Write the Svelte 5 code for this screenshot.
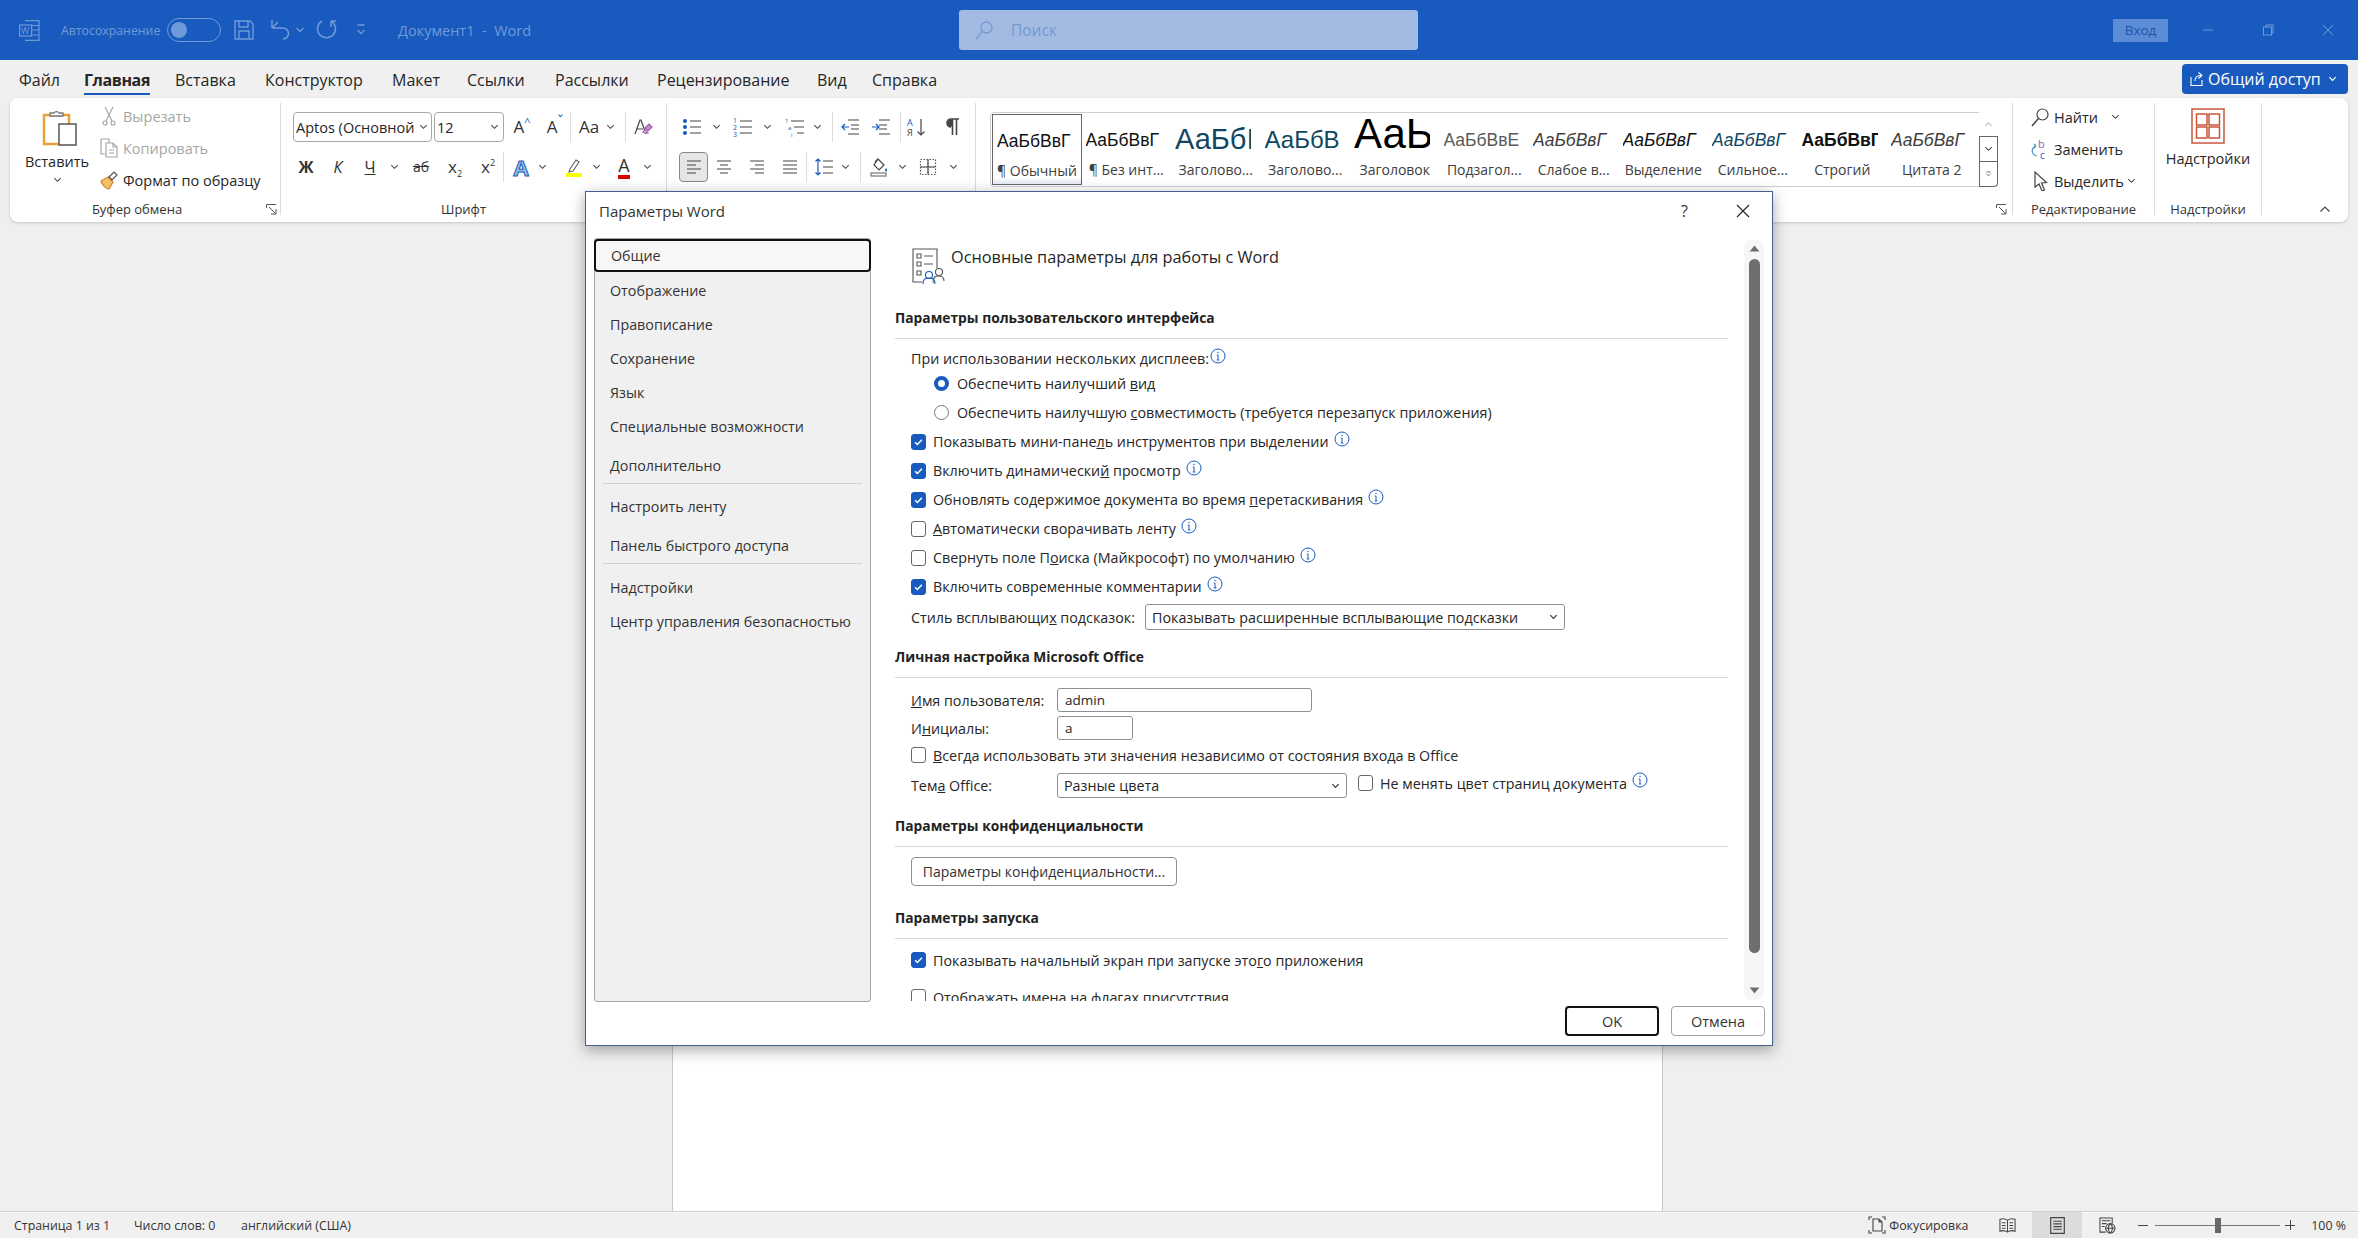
<script>
  const tabs = [
    ['Файл', 65], ['Главная', 91], ['Вставка', 90], ['Конструктор', 127], ['Макет', 75],
    ['Ссылки', 88], ['Рассылки', 102], ['Рецензирование', 160], ['Вид', 55], ['Справка', 80]
  ];

  const icons = {
    bullets: '<g fill="#185abd" stroke="none"><circle cx="3" cy="4" r="2"/><circle cx="3" cy="10" r="2"/><circle cx="3" cy="16" r="2"/></g><path d="M8 4h11M8 10h11M8 16h11"/>',
    numbers: '<g fill="#185abd" stroke="none" font-size="7" font-family="Open Sans"><text x="0" y="6">1</text><text x="0" y="13">2</text><text x="0" y="20">3</text></g><path d="M7 4h12M7 10h12M7 16h12"/>',
    multi: '<g fill="#185abd" stroke="none" font-size="6" font-family="Open Sans"><text x="0" y="6">1</text><text x="3" y="13">a</text><text x="6" y="20">i</text></g><path d="M6 4h13M9 10h10M12 16h7"/>',
    outdent: '<path d="M8 3h11M11 8h8M11 12h8M8 17h11"/><path d="M9 10H2M5 7l-3 3 3 3" stroke="#185abd"/>',
    indent: '<path d="M1 3h11M1 8h8M1 12h8M1 17h11" transform="translate(7 0)"/><path d="M1 10h7M5 7l3 3-3 3" stroke="#185abd"/>',
    sort: '<g font-size="9" font-family="Open Sans" stroke="none"><text x="1" y="9" fill="#185abd">А</text><text x="1" y="19" fill="#444">Я</text></g><path d="M15 2v16M11.500 14.500 15 18l3.500-3.500"/>',
    pilcrow: '<path d="M9 10a4 4 0 0 1 0-8h8M10.500 2v16M14.500 2v16" stroke-width="1.600"/><path d="M9 2.500a3.500 3.500 0 0 0 0 7h1.500v-7z" fill="#444" stroke="none"/>',
    left: '<path d="M3 4h14M3 8h9M3 12h14M3 16h9"/>',
    center: '<path d="M3 4h14M6 8h8M3 12h14M6 16h8"/>',
    right: '<path d="M3 4h14M8 8h9M3 12h14M8 16h9"/>',
    justify: '<path d="M3 4h14M3 8h14M3 12h14M3 16h14"/>',
    spacing: '<path d="M9 4h10M9 10h10M9 16h10"/><path d="M4 2v16M1.500 4.500 4 2l2.500 2.500M1.500 15.500 4 18l2.500-2.500" stroke="#185abd"/>',
    shading: '<path d="m9 2 6 6-5 5-5-5z"/><path d="M6 5 9 2"/><path d="M17 11c1 1.500 1.500 2.200 1 3s-2 .5-2-.5.500-1.500 1-2.500z" fill="#185abd" stroke="none"/><rect x="2" y="16" width="15" height="3" fill="#fff" stroke="#777"/>',
    borders: '<path d="M2.500 2.500h15v15h-15zM10 2.500v15M2.500 10h15" stroke-dasharray="1.500 1.500" stroke="#555"/><path d="M2.500 10h15M10 2.500v15" stroke="#555"/>',
    clear: '<path d="M2 17 7 3h1l5 14M4 12h6"/><path d="m12 11 4-4 3 3-4 4z" fill="#c58ad0" stroke="#a35bb0"/><path d="m10 15 2-2 3 3h-3z" fill="#fff" stroke="#a35bb0"/>',
    hl: '<path d="m6 12 6-9 3 2-6 9-4 1z" fill="#fff" stroke="#666"/><rect x="2" y="16" width="16" height="4" fill="#ffff00" stroke="none"/>',
    find: '<circle cx="12.500" cy="7.500" r="5.500"/><path d="M8.500 11.500 2 19" stroke-width="1.500"/>',
    replace: '<text x="8" y="9" font-size="11" fill="#a35bb0" stroke="none" font-family="Open Sans">b</text><text x="10" y="20" font-size="10" fill="#185abd" stroke="none" font-family="Open Sans">c</text><path d="M6 7C2 8 1 13 4 16M6 7 4 5M6 7 4 9M4 16l3 1" stroke="#3b9ac6"/>',
    select: '<path d="m5 1 0 15 4-3 3 7 2.500-1-3-7 5-.5z"/>'
  };

  const font1 = [
    { w: 36, t: 'A', up: 1 }, { w: 30, t: 'A', up: -1 }, { sep: 1 }, { w: 34, t: 'Aa' }, { w: 8, i: 'chev' },
    { w: 11 }, { sep: 1 }, { w: 32, i: 'clear' }
  ];
  const font2 = [
    { w: 26, t: 'Ж', c: 'bold' }, { w: 38, t: 'К', c: 'ital' }, { w: 26, t: 'Ч', c: 'und' }, { w: 22, i: 'chev' },
    { w: 32, t: 'аб', c: 'str' }, { w: 36, t: 'x', sub: '2' }, { w: 30, t: 'x', sup: '2' }, { sep: 1 },
    { w: 32, t: 'A', c: 'effect' }, { w: 10, i: 'chev' }, { w: 17 }, { w: 20, i: 'hl' }, { w: 24, i: 'chev' },
    { w: 32, t: 'A', c: 'red' }, { w: 14, i: 'chev' }
  ];
  const para1 = [
    { w: 13 }, { w: 24, i: 'bullets' }, { w: 24, i: 'chev' }, { w: 30, i: 'numbers' }, { w: 18, i: 'chev' },
    { w: 38, i: 'multi' }, { w: 6, i: 'chev' }, { w: 12 }, { sep: 1 }, { w: 32, i: 'outdent' }, { w: 30, i: 'indent' },
    { w: 4 }, { sep: 1 }, { w: 28, i: 'sort' }, { w: 44, i: 'pilcrow' }
  ];
  const para2 = [
    { w: 12 }, { w: 29, i: 'left', on: 1 }, { w: 32, i: 'center' }, { w: 34, i: 'right' }, { w: 32, i: 'justify' },
    { sep: 1 }, { w: 32, i: 'spacing' }, { w: 10, i: 'chev' }, { w: 10 }, { sep: 1 }, { w: 34, i: 'shading' },
    { w: 12, i: 'chev' }, { w: 40, i: 'borders' }, { w: 10, i: 'chev' }
  ];

  const styles = [
    ['АаБбВвГ', '¶ Обычный', 's-normal'], ['АаБбВвГ', '¶ Без инт...', 's-normal'], ['АаБбI', 'Заголово...', 's-h1'],
    ['АаБбВ', 'Заголово...', 's-h2'], ['АаЬ', 'Заголовок', 's-title'], ['АаБбВвЕ', 'Подзагол...', 's-sub'],
    ['АаБбВвГ', 'Слабое в...', 's-em s-soft'], ['АаБбВвГ', 'Выделение', 's-em'], ['АаБбВвГ', 'Сильное...', 's-em s-strong-em'],
    ['АаБбВвГ', 'Строгий', 's-normal s-bold'], ['АаБбВвГ', 'Цитата 2', 's-em s-soft']
  ];
</script>

{#snippet svgIcon(name)}
  <svg class="ic" viewBox="0 0 20 20" fill="none" stroke="#444" stroke-width="1.200">{@html icons[name]}</svg>
{/snippet}

{#snippet toolRow(items)}
  <div class="trow">
    {#each items as it}
      {#if it.sep}
        <span class="tsep"></span>
      {:else}
        <span class="tool" class:on={it.on} style:width="{it.w}px">
          {#if it.i}
            {#if it.i === 'chev'}
              <svg class="chev" viewBox="0 0 10 6" fill="none" stroke="#444" stroke-width="1.200"><path d="m1.500 1 3.500 3.500L8.500 1"/></svg>
            {:else}
              {@render svgIcon(it.i)}
            {/if}
          {:else if it.t}
            <span class="glyph {it.c || ''}">{it.t}{#if it.sub}<sub>{it.sub}</sub>{/if}{#if it.sup}<sup>{it.sup}</sup>{/if}{#if it.up === 1}<sup class="caret">^</sup>{/if}{#if it.up === -1}<sup class="caret caret-dn">ˇ</sup>{/if}</span>
          {/if}
        </span>
      {/if}
    {/each}
  </div>
{/snippet}

{#snippet launcher()}
  <svg class="launch" viewBox="0 0 11 11" fill="none" stroke="#555" stroke-width="1"><path d="M.5 4V.5H10M3 3l6.500 6.500M5 10h5V5"/></svg>
{/snippet}

{#snippet info()}
  <svg class="info" viewBox="0 0 16 16" fill="none" stroke="#185abd" stroke-width="1"><circle cx="8" cy="8" r="7"/><path d="M8 7v5M6.800 7H8M6.800 12h2.500"/><circle cx="8" cy="4.500" r=".7" fill="#185abd" stroke="none"/></svg>
{/snippet}

{#snippet box(on)}
  <span class="cb" class:checked={on}>
    {#if on}
      <svg viewBox="0 0 16 16" fill="none" stroke="#fff" stroke-width="1.800"><path d="m3.800 8.300 2.800 2.800 5.600-6"/></svg>
    {/if}
  </span>
{/snippet}

{#snippet check(on, pre, key, post, hasInfo)}
  <div class="opt">
    {@render box(on)}
    <span class="opt-label">{pre}<u>{key}</u>{post}</span>
    {#if hasInfo}{@render info()}{/if}
  </div>
{/snippet}

{#snippet selectBox(text, cls)}
  <div class="select {cls}">
    <span>{text}</span>
    <svg viewBox="0 0 10 6" fill="none" stroke="#333" stroke-width="1.300"><path d="m1.500 1 3.500 3.500L8.500 1"/></svg>
  </div>
{/snippet}

<div class="app">
  <header class="titlebar">
    <div class="tb-left">
      <svg class="tb-word" viewBox="0 0 21 21" fill="none" stroke="currentColor" stroke-width="1.200"><path d="M6 .6h14v19.800H6M13 5.500h7M13 10h7M13 15h7"/><rect x=".6" y="5" width="12" height="11" /><text x="2" y="14" font-size="9" fill="currentColor" stroke="none" font-family="Open Sans">W</text></svg>
      <span class="tb-auto">Автосохранение</span>
      <span class="toggle"><span class="knob"></span></span>
      <svg class="tb-save" viewBox="0 0 20 20" fill="none" stroke="currentColor" stroke-width="1.400"><path d="M1 1h15l3 3v15H1zM5 1v6h9V1M5 19v-8h10v8"/></svg>
      <svg class="tb-undo" viewBox="0 0 20 24" fill="none" stroke="currentColor" stroke-width="1.500"><path d="M2 10h11a5.500 5.500 0 0 1 0 11M2 2v8M2 10l6-6"/></svg>
      <svg class="tb-chev" viewBox="0 0 10 6" fill="none" stroke="currentColor" stroke-width="1.300"><path d="m1.500 1 3.500 3.500L8.500 1"/></svg>
      <svg class="tb-redo" viewBox="0 0 21 24" fill="none" stroke="currentColor" stroke-width="1.500"><path d="M15 3a9 9 0 1 1-9 0M15 3V9M15 3h5"/></svg>
      <svg class="tb-cust" viewBox="0 0 10 12" fill="none" stroke="currentColor" stroke-width="1.300"><path d="M1.500 1h7M1.500 6 5 9.500 8.500 6"/></svg>
      <span class="tb-doc">Документ1&nbsp; -&nbsp; Word</span>
    </div>
    <div class="search">
      <svg viewBox="0 0 20 20" fill="none" stroke="currentColor" stroke-width="1.300"><circle cx="12.500" cy="7.500" r="5.500"/><path d="M8.500 11.500 2 19"/></svg>
      <span>Поиск</span>
    </div>
    <div class="tb-right">
      <span class="login">Вход</span>
      <span class="winbtn"><svg viewBox="0 0 14 14" stroke="currentColor"><path d="M2 7h10"/></svg></span>
      <span class="winbtn"><svg viewBox="0 0 14 14" fill="none" stroke="currentColor"><rect x="2.500" y="4" width="8" height="8"/><path d="M5 4V2h7v8h-1.500"/></svg></span>
      <span class="winbtn"><svg viewBox="0 0 14 14" fill="none" stroke="currentColor"><path d="m2 2 10 10M12 2 2 12"/></svg></span>
    </div>
  </header>

  <nav class="tabs">
    {#each tabs as [name, w]}
      <div class="tab" style:width="{w}px"><span class:active={name === 'Главная'}>{name}</span></div>
    {/each}
    <div class="share">
      <svg viewBox="0 0 16 16" fill="none" stroke="#fff" stroke-width="1.100"><path d="M2 6v8.500h11V9M6 10c0-4 3-5.500 6-5.500M9.500 1.500l3.500 3-3.500 3"/></svg>
      <span>Общий доступ</span>
      <svg class="share-chev" viewBox="0 0 10 6" fill="none" stroke="#fff" stroke-width="1.300"><path d="m1.500 1 3.500 3.500L8.500 1"/></svg>
    </div>
  </nav>

  <section class="ribbon">
    <div class="group g-clip">
      <div class="gbody clip-body">
        <div class="paste">
          <svg viewBox="0 0 36 38" fill="none">
            <rect x="2" y="7" width="25" height="29" stroke="#e9a23b" stroke-width="2.500"/>
            <path d="M8 8V5h4a3 3 0 0 1 5 0h4v3z" fill="#fff" stroke="#777" stroke-width="1.300"/>
            <rect x="17" y="16" width="17" height="21" fill="#fff" stroke="#555" stroke-width="1.500"/>
          </svg>
          <span>Вставить</span>
          <svg class="chev" viewBox="0 0 10 6" fill="none" stroke="#444" stroke-width="1.200"><path d="m1.500 1 3.500 3.500L8.500 1"/></svg>
        </div>
        <div class="clip-list">
          <div class="clip-row off">
            <svg viewBox="0 0 20 20" fill="none" stroke="#a6a6a6" stroke-width="1.200"><circle cx="6" cy="17" r="2"/><circle cx="14" cy="17" r="2"/><path d="M7 15 14 1M13 15 6 1"/></svg>
            <span>Вырезать</span>
          </div>
          <div class="clip-row off">
            <svg viewBox="0 0 20 20" fill="none" stroke="#a6a6a6" stroke-width="1.200"><path d="M2 1h8v4M2 1v15h4"/><path d="M7 5h7l4 4v10H7zM14 5v4h4M10 12h5M10 15h5"/></svg>
            <span>Копировать</span>
          </div>
          <div class="clip-row">
            <svg viewBox="0 0 20 20" fill="none"><path d="m2 11 7-4 5 5-4 7c-3-.5-7-4-8-8z" fill="#f5c26b" stroke="#d9822b" stroke-width="1.200"/><path d="m10 7 5-5 3 3-5 5z" fill="#fff" stroke="#555" stroke-width="1.200"/></svg>
            <span>Формат по образцу</span>
          </div>
        </div>
      </div>
      <div class="glabel">Буфер обмена {@render launcher()}</div>
    </div>

    <div class="group g-font">
      <div class="gbody rows">
        <div class="frow">
          <div class="cbox cbox-font"><span>Aptos (Основной</span><svg class="chev" viewBox="0 0 10 6" fill="none" stroke="#444" stroke-width="1.200"><path d="m1.500 1 3.500 3.500L8.500 1"/></svg></div>
          <div class="cbox cbox-size"><span>12</span><svg class="chev" viewBox="0 0 10 6" fill="none" stroke="#444" stroke-width="1.200"><path d="m1.500 1 3.500 3.500L8.500 1"/></svg></div>
          {@render toolRow(font1)}
        </div>
        {@render toolRow(font2)}
      </div>
      <div class="glabel">Шрифт {@render launcher()}</div>
    </div>

    <div class="group g-para">
      <div class="gbody rows">
        {@render toolRow(para1)}
        {@render toolRow(para2)}
      </div>
    </div>

    <div class="group g-styles">
      <div class="gbody gallery-wrap">
        <div class="gallery">
          {#each styles as [sample, label, cls], i}
            <div class="style" class:current={i === 0}>
              <div class="preview {cls}">{sample}</div>
              <div class="stlabel">{label}</div>
            </div>
          {/each}
          <div class="gscroll">
            <span class="dim"><svg class="chev" viewBox="0 0 10 6" fill="none" stroke="#bbb" stroke-width="1.200"><path d="m1.500 5 3.500-3.500L8.500 5"/></svg></span>
            <span class="mid"><svg class="chev" viewBox="0 0 10 6" fill="none" stroke="#444" stroke-width="1.200"><path d="m1.500 1 3.500 3.500L8.500 1"/></svg></span>
            <span class="more"><svg class="chev" viewBox="0 0 10 10" fill="none" stroke="#444" stroke-width="1.200"><path d="M1.500 1.500h7M1.500 4.500 5 8l3.500-3.500"/></svg></span>
          </div>
        </div>
      </div>
      <div class="glabel glabel-end">{@render launcher()}</div>
    </div>

    <div class="group g-edit">
      <div class="gbody edit-list">
        <div class="edit-row">{@render svgIcon('find')}<span class="e-find">Найти</span><svg class="chev" viewBox="0 0 10 6" fill="none" stroke="#444" stroke-width="1.200"><path d="m1.500 1 3.500 3.500L8.500 1"/></svg></div>
        <div class="edit-row">{@render svgIcon('replace')}<span>Заменить</span></div>
        <div class="edit-row">{@render svgIcon('select')}<span class="e-sel">Выделить</span><svg class="chev" viewBox="0 0 10 6" fill="none" stroke="#444" stroke-width="1.200"><path d="m1.500 1 3.500 3.500L8.500 1"/></svg></div>
      </div>
      <div class="glabel">Редактирование</div>
    </div>

    <div class="group g-addin">
      <div class="gbody addin-body">
        <svg viewBox="0 0 34 36" fill="none" stroke="#c8563c" stroke-width="1.500">
          <rect x="1" y="1" width="32" height="34"/>
          <rect x="5.500" y="6" width="10.500" height="11"/><rect x="18" y="6" width="10.500" height="11"/>
          <rect x="5.500" y="19" width="10.500" height="11"/><rect x="18" y="19" width="10.500" height="11"/>
        </svg>
        <span>Надстройки</span>
      </div>
      <div class="glabel">Надстройки</div>
    </div>

    <div class="group g-end">
      <svg viewBox="0 0 12 8" fill="none" stroke="#444" stroke-width="1.200"><path d="m1.500 6.500 4.500-4.500 4.500 4.500"/></svg>
    </div>
  </section>

  <main class="workspace">
    <div class="page"></div>
  </main>

  <footer class="statusbar">
    <span class="st st-page">Страница 1 из 1</span>
    <span class="st st-words">Число слов: 0</span>
    <span class="st">английский (США)</span>
    <div class="st-right">
      <svg class="st-focus" viewBox="0 0 18 18" fill="none" stroke="#444" stroke-width="1.100"><path d="M1 4V1h3M14 1h3v3M17 14v3h-3M4 17H1v-3"/><path d="M5 3h6l3 3v9H5zM11 3v3h3"/></svg>
      <span class="st-ftext">Фокусировка</span>
      <span class="view"><svg viewBox="0 0 18 16" fill="none" stroke="#444" stroke-width="1.100"><path d="M1 1.500c3-1 6-.5 8 1 2-1.500 5-2 8-1V14c-3-1-6-.5-8 1-2-1.500-5-2-8-1zM9 2.500V15M3 5h4M3 8h4M3 11h4M11 5h4M11 8h4M11 11h4"/></svg></span>
      <span class="view v-print"><svg viewBox="0 0 14 16" fill="none" stroke="#444" stroke-width="1.100"><path d="M.6.6h12.800v14.800H.6zM3 4h8M3 6.500h8M3 9h8M3 11.500h8"/></svg></span>
      <span class="view"><svg viewBox="0 0 18 18" fill="none" stroke="#444" stroke-width="1.100"><path d="M7 16H1V1h13v6M3 4h9M3 7h5M3 10h3"/><circle cx="12" cy="12" r="5" fill="#efefef"/><path d="M7 12h10M12 7c-3 3-3 7 0 10M12 7c3 3 3 7 0 10"/></svg></span>
      <span class="zoom-minus"></span>
      <div class="slider"><span class="thumb"></span></div>
      <span class="zoom-plus"></span>
      <span class="st-zoom">100 %</span>
    </div>
  </footer>

  <div class="dialog">
    <div class="dlg-title">
      <span>Параметры Word</span>
      <span class="dlg-help">?</span>
      <svg class="dlg-close" viewBox="0 0 14 14" fill="none" stroke="#222" stroke-width="1.100"><path d="m1 1 12 12M13 1 1 13"/></svg>
    </div>
    <div class="dlg-body">
      <div class="dlg-nav">
        <div class="nav-item selected">Общие</div>
        <div class="nav-item">Отображение</div>
        <div class="nav-item">Правописание</div>
        <div class="nav-item">Сохранение</div>
        <div class="nav-item">Язык</div>
        <div class="nav-item">Специальные возможности</div>
        <div class="nav-item mt5">Дополнительно</div>
        <div class="nav-sep"></div>
        <div class="nav-item mt6">Настроить ленту</div>
        <div class="nav-item mt5">Панель быстрого доступа</div>
        <div class="nav-sep"></div>
        <div class="nav-item mt7">Надстройки</div>
        <div class="nav-item">Центр управления безопасностью</div>
      </div>

      <div class="dlg-content">
        <div class="intro">
          <svg viewBox="0 0 33 36" fill="none" stroke="#555" stroke-width="1.100">
            <path d="M25 20V1H1v33h9M5 6h4v4H5zM5 14h4v4H5zM5 23h4v4H5zM12 8h9M12 16h9"/>
            <circle cx="27" cy="24" r="3.500"/><path d="M21 35c0-6 2-7 6-7s5 2 5 5"/>
            <circle cx="17" cy="27" r="3.500" stroke="#185abd"/><path d="M11 36c0-5 2-6 6-6s6 1 6 6" stroke="#185abd"/>
          </svg>
          <span>Основные параметры для работы с Word</span>
        </div>

        <h3 class="sec first">Параметры пользовательского интерфейса</h3>
        <div class="line multi">При использовании нескольких дисплеев:{@render info()}</div>
        <div class="radio-row"><span class="radio on"></span><span>Обеспечить наилучший <u>в</u>ид</span></div>
        <div class="radio-row"><span class="radio"></span><span>Обеспечить наилучшую <u>с</u>овместимость (требуется перезапуск приложения)</span></div>
        {@render check(true, 'Показывать мини-пане', 'л', 'ь инструментов при выделении', true)}
        {@render check(true, 'Включить динамически', 'й', ' просмотр', true)}
        {@render check(true, 'Обновлять содержимое документа во время ', 'п', 'еретаскивания', true)}
        {@render check(false, '', 'А', 'втоматически сворачивать ленту', true)}
        {@render check(false, 'Свернуть поле П', 'о', 'иска (Майкрософт) по умолчанию', true)}
        {@render check(true, 'Включить современные комментарии', '', '', true)}
        <div class="field tips">
          <span class="tips-label">Стиль всплывающи<u>х</u> подсказок:</span>
          {@render selectBox('Показывать расширенные всплывающие подсказки', 'sel-tips')}
        </div>

        <h3 class="sec s2">Личная настройка Microsoft Office</h3>
        <div class="field f-name">
          <span class="flabel"><u>И</u>мя пользователя:</span>
          <div class="input in-name">admin</div>
        </div>
        <div class="field f-init">
          <span class="flabel">И<u>н</u>ициалы:</span>
          <div class="input in-init">a</div>
        </div>
        <div class="always">{@render check(false, '', 'В', 'сегда использовать эти значения независимо от состояния входа в Office', false)}</div>
        <div class="field f-theme">
          <span class="flabel">Тем<u>а</u> Office:</span>
          {@render selectBox('Разные цвета', 'sel-theme')}
          <div class="theme-opt">{@render check(false, 'Не менять цвет страниц документа', '', '', true)}</div>
        </div>

        <h3 class="sec s3">Параметры конфиденциальности</h3>
        <button class="privacy">Параметры конфиденциальности...</button>

        <h3 class="sec s4">Параметры запуска</h3>
        <div class="start1">{@render check(true, 'Показывать начальный экран при запуске это', 'г', 'о приложения', false)}</div>
        <div class="start2">{@render check(false, 'Отображать имена на флагах присутствия', '', '', false)}</div>
      </div>

      <div class="scroll">
        <svg viewBox="0 0 12 8" fill="#6e6e6e"><path d="M6 .5 11.500 7.500H.5z"/></svg>
        <div class="sthumb"></div>
        <svg class="sdown" viewBox="0 0 12 8" fill="#6e6e6e"><path d="M.5.5h11L6 7.500z"/></svg>
      </div>
    </div>
    <div class="dlg-foot">
      <button class="dbtn default">OK</button>
      <button class="dbtn">Отмена</button>
    </div>
  </div>
</div>

<style>
  :global(body) {
    margin: 0;
    font-family: "Open Sans", "Noto Sans", sans-serif;
    background: #efefef;
    color: #262626;
  }

  .app {
    position: relative;
    width: 2358px;
    height: 1238px;
    overflow: hidden;
    display: flex;
    flex-direction: column;
    font-size: 14.500px;
  }

  /* title bar */
  .titlebar {
    flex: none;
    height: 60px;
    background: #185abd;
    color: #6f9ad9;
    display: grid;
    grid-template-columns: 959px 459px 1fr;
  }
  .tb-left {
    display: flex;
    align-items: center;
    padding-left: 19px;
  }
  .tb-word { width: 21px; height: 21px; }
  .tb-auto { margin-left: 21px; width: 106px; font-size: 12.300px; white-space: nowrap; }
  .toggle {
    width: 54px;
    height: 24px;
    box-sizing: border-box;
    border: 1.500px solid #6f9ad9;
    border-radius: 12px;
    display: flex;
    align-items: center;
    padding-left: 3px;
  }
  .knob { width: 16px; height: 16px; border-radius: 50%; background: #6f9ad9; }
  .tb-save { margin-left: 13px; width: 20px; height: 20px; }
  .tb-undo { margin-left: 16px; width: 20px; height: 24px; }
  .tb-chev { margin-left: 5px; width: 10px; height: 6px; }
  .tb-redo { margin-left: 11px; width: 21px; height: 24px; }
  .tb-cust { margin-left: 19px; width: 10px; height: 12px; }
  .tb-doc { margin-left: 32px; font-size: 14.500px; }
  .search {
    margin-top: 10px;
    height: 40px;
    background: #a3bbe3;
    border-radius: 3px;
    display: flex;
    align-items: center;
    color: #7498d2;
    padding-left: 15px;
    font-size: 15.500px;
  }
  .search svg { width: 20px; height: 20px; margin-right: 17px; }
  .tb-right { display: flex; align-items: center; justify-content: flex-end; }
  .login {
    width: 55px;
    height: 23px;
    margin-right: 10px;
    background: #5c8cd6;
    color: #1f55a8;
    font-size: 13.500px;
    display: flex;
    align-items: center;
    justify-content: center;
  }
  .winbtn { width: 60px; display: flex; justify-content: center; }
  .winbtn svg { width: 14px; height: 14px; }

  /* tabs */
  .tabs {
    flex: none;
    height: 38px;
    background: #f0f0f0;
    display: flex;
    padding-left: 19px;
    box-sizing: border-box;
  }
  .tab { padding-top: 9px; font-size: 16px; line-height: 22px; white-space: nowrap; }
  .tab span { display: inline-block; padding-bottom: 2px; }
  .tab span.active { font-weight: 700; border-bottom: 2px solid #185abd; letter-spacing: -.4px; }
  .share {
    margin: 4px 10px 0 auto;
    width: 166px;
    height: 30px;
    background: #185abd;
    color: #fff;
    border-radius: 4px;
    display: flex;
    align-items: center;
    padding-left: 7px;
    box-sizing: border-box;
    font-size: 16px;
  }
  .share svg { width: 16px; height: 16px; margin-right: 3px; }
  .share .share-chev { width: 9px; height: 6px; margin-left: 7px; margin-right: 0; }

  /* ribbon */
  .ribbon {
    flex: none;
    height: 124px;
    margin: 0 10px;
    padding-top: 5px;
    box-sizing: border-box;
    background: #fff;
    border-radius: 8px;
    box-shadow: 0 1px 3px rgba(0, 0, 0, .18);
    display: flex;
  }
  .group {
    position: relative;
    height: 112px;
    box-sizing: border-box;
    border-right: 1px solid #dcdcdc;
    flex: none;
  }
  .gbody { height: 96px; box-sizing: border-box; }
  .glabel {
    position: relative;
    margin-top: 3px;
    line-height: 14px;
    font-size: 13px;
    text-align: center;
    color: #333;
    white-space: nowrap;
  }
  .launch { position: absolute; right: 3px; top: 2px; width: 11px; height: 11px; }
  .g-clip { width: 271px; }
  .g-font { width: 386px; }
  .g-para { width: 309px; }
  .g-styles { width: 1037px; }
  .g-edit { width: 142px; }
  .g-addin { width: 107px; }
  .g-end { flex: 1; border: none; position: relative; }
  .g-end svg { position: absolute; right: 17px; bottom: 2px; width: 12px; height: 8px; }
  .g-clip .glabel { padding-right: 16px; }
  .g-font .glabel { padding-right: 20px; }
  .g-font .launch { display: none; }

  .clip-body { display: flex; }
  .paste {
    width: 84px;
    margin-left: 5px;
    display: flex;
    flex-direction: column;
    align-items: center;
    font-size: 14.500px;
  }
  .paste > svg:first-child { width: 36px; height: 38px; margin: 5px 0 0 5px; }
  .paste span { margin-top: 6px; line-height: 20px; }
  .paste .chev { margin-top: 5px; }
  .clip-list { margin-top: -3px; }
  .clip-row { display: flex; align-items: center; height: 32px; white-space: nowrap; font-size: 14.500px; }
  .clip-row svg { width: 20px; height: 20px; margin-right: 4px; }
  .clip-row.off { color: #a6a6a6; }

  .rows { padding-top: 9px; display: flex; flex-direction: column; gap: 10px; }
  .g-font .rows { padding-left: 12px; }
  .frow { display: flex; }
  .trow { display: flex; height: 30px; align-items: center; }
  .tool { flex: none; height: 30px; display: flex; align-items: center; justify-content: center; box-sizing: border-box; position: relative; }
  .tool.on { background: #e6e6e6; border: 1px solid #8a8a8a; border-radius: 4px; }
  .tsep { flex: none; width: 2px; height: 30px; box-sizing: border-box; border-left: 1px solid #dcdcdc; }
  .ic { width: 20px; height: 20px; flex: none; }
  .chev { width: 9px; height: 6px; flex: none; overflow: visible; }
  .glyph { font-size: 17px; color: #333; line-height: 20px; white-space: nowrap; }
  .glyph.bold { font-weight: 700; font-size: 16px; }
  .glyph.ital { font-style: italic; font-size: 16px; }
  .glyph.und { text-decoration: underline; font-size: 16px; }
  .glyph.str { text-decoration: line-through; font-size: 14px; }
  .glyph.effect { font-weight: 700; font-size: 22px; color: #9bc2e6; -webkit-text-stroke: 1px #185abd; }
  .glyph.red { font-size: 18px; border-bottom: 4px solid #e00000; line-height: 19px; }
  .glyph sub, .glyph sup { font-size: 9px; line-height: 0; }
  .caret { color: #185abd; font-size: 11px !important; }
  .caret-dn { font-size: 14px !important; }

  .cbox {
    height: 30px;
    box-sizing: border-box;
    border: 1px solid #a8a8a8;
    border-radius: 4px;
    display: flex;
    align-items: center;
    justify-content: space-between;
    padding: 0 3px 0 2px;
    white-space: nowrap;
    font-size: 14.500px;
    flex: none;
  }
  .cbox-font { width: 139px; }
  .cbox-size { width: 70px; margin-left: 2px; padding-right: 4px; }

  .gallery-wrap { padding-top: 9px; padding-left: 14px; }
  .gallery {
    width: 1008px;
    height: 75px;
    box-sizing: border-box;
    border: 1px solid #cfcfcf;
    border-radius: 4px;
    display: flex;
    padding-left: 1px;
    position: relative;
  }
  .style {
    width: 89.500px;
    flex: none;
    height: 71px;
    margin-top: 1px;
    box-sizing: border-box;
    padding: 0 4px;
    overflow: hidden;
    text-align: center;
  }
  .style.current { border: 1px solid #666; background: linear-gradient(#fff 90%, #e3e8f3); }
  .preview { width: 76px; height: 44px; line-height: 52px; white-space: nowrap; overflow: hidden; font-family: "Liberation Sans", sans-serif; text-align: left; }
  .stlabel { font-size: 14px; line-height: 24px; color: #404040; white-space: nowrap; }
  .s-normal { font-size: 17.500px; color: #111; }
  .s-h1 { font-size: 29px; color: #0f4761; line-height: 50px; }
  .s-h2 { font-size: 24px; color: #0f4761; }
  .s-title { font-size: 42px; line-height: 40px; color: #000; text-align: center; }
  .s-sub { font-size: 17.500px; color: #595959; }
  .s-em { font-size: 17.500px; font-style: italic; color: #111; }
  .s-soft { color: #404040; }
  .s-strong-em { color: #0f4761; }
  .s-bold { font-weight: 700; }
  .gscroll {
    position: absolute;
    right: -1px;
    top: -1px;
    width: 19px;
    height: 75px;
    display: flex;
    flex-direction: column;
    background: #fff;
  }
  .gscroll span {
    flex: 1;
    display: flex;
    align-items: center;
    justify-content: center;
  }
  .gscroll .mid { border: 1px solid #666; border-width: 1px 1px; }
  .gscroll .more { border: 1px solid #666; border-top: 0; border-radius: 0 0 4px 0; }
  .glabel-end { height: 14px; }
  .glabel-end .launch { right: 5px; top: 2px; }

  .edit-list { padding: 0 0 0 17px; margin-top: -2px; }
  .edit-row { display: flex; align-items: center; height: 32px; white-space: nowrap; font-size: 14.500px; }
  .edit-row .ic { margin-right: 4px; }
  .e-find { width: 57px; }
  .e-sel { margin-right: 3px; }
  .edit-list + .glabel { margin-top: 5px; }

  .addin-body { display: flex; flex-direction: column; align-items: center; font-size: 14.500px; }
  .addin-body svg { width: 34px; height: 36px; margin-top: 5px; }
  .addin-body span { margin-top: 5px; line-height: 20px; }

  /* document */
  .workspace { flex: 1; min-height: 0; padding-left: 672px; }
  .page {
    width: 991px;
    height: 100%;
    box-sizing: border-box;
    background: #fff;
    border: 1px solid #c9c9c9;
    border-width: 0 1px;
  }

  /* status bar */
  .statusbar {
    flex: none;
    height: 27px;
    box-sizing: border-box;
    background: #f0f0f0;
    border-top: 1px solid #cfcfcf;
    box-shadow: inset 0 1px 0 #fafafa;
    display: flex;
    align-items: center;
    font-size: 12.400px;
    color: #333;
    padding-left: 14px;
  }
  .st { white-space: nowrap; }
  .st-page { width: 120px; }
  .st-words { width: 107px; }
  .st-right { margin-left: auto; display: flex; align-items: center; height: 100%; }
  .st-focus { width: 18px; height: 18px; margin-right: 3px; }
  .st-ftext { width: 93px; }
  .view { width: 50px; height: 100%; display: flex; align-items: center; justify-content: center; }
  .view svg { width: 17px; height: 17px; }
  .v-print { background: #dcdcdc; }
  .zoom-minus { width: 10px; height: 1px; background: #444; margin-left: 6px; margin-right: 7px; }
  .slider { width: 125px; height: 1px; background: #777; display: flex; align-items: center; padding-left: 60px; box-sizing: border-box; }
  .thumb { width: 6px; height: 15px; background: #666; }
  .zoom-plus {
    width: 10px;
    height: 10px;
    margin-left: 5px;
    background:
      linear-gradient(#444, #444) center / 10px 1px no-repeat,
      linear-gradient(#444, #444) center / 1px 10px no-repeat;
  }
  .st-zoom { margin-left: 16px; margin-right: 12px; white-space: nowrap; }

  /* dialog */
  .dialog {
    position: absolute;
    left: 585px;
    top: 191px;
    width: 1188px;
    height: 855px;
    box-sizing: border-box;
    background: #fff;
    border: 1px solid #44608f;
    box-shadow: 0 4px 14px rgba(0, 0, 0, .35);
    display: flex;
    flex-direction: column;
    font-size: 14.300px;
  }
  .dlg-title {
    flex: none;
    height: 46px;
    box-sizing: border-box;
    padding: 0 22px 8px 13px;
    display: flex;
    align-items: center;
    font-size: 15px;
    color: #333;
  }
  .dlg-help { margin-left: auto; margin-right: 48px; font-size: 16px; }
  .dlg-close { width: 14px; height: 14px; }
  .dlg-body { flex: none; height: 764px; display: flex; }
  .dlg-nav {
    flex: none;
    width: 277px;
    margin-left: 8px;
    box-sizing: border-box;
    background: #f0f0f0;
    border: 1px solid #a6a6a6;
    border-radius: 3px;
  }
  .nav-item { height: 34px; line-height: 34px; padding-left: 15px; white-space: nowrap; color: #333; }
  .nav-item.selected { height: 33px; line-height: 30px; margin: 0 -1px 0 -1px; background: #f7f7f7; border: 2px solid #111; border-radius: 4px; box-sizing: border-box; padding-left: 15px; }
  .nav-item:nth-child(2) { margin-top: 2px; }
  .mt5 { margin-top: 5px; }
  .mt6 { margin-top: 6px; }
  .mt7 { margin-top: 7px; }
  .nav-sep { height: 1px; background: #d0d0d0; margin: 0 8px; }

  .dlg-content {
    flex: none;
    width: 833px;
    height: 763px;
    margin-left: 24px;
    overflow: hidden;
  }
  .intro { display: flex; padding: 10px 0 0 17px; height: 36px; }
  .intro svg { width: 33px; height: 36px; flex: none; }
  .intro span { margin-left: 6px; font-size: 16.300px; line-height: 18px; }
  .sec {
    margin: 0;
    height: 30px;
    line-height: 20px;
    box-sizing: content-box;
    border-bottom: 1px solid #d4d4d4;
    font-size: 13.800px;
    font-weight: 700;
    color: #222;
  }
  .sec.first { margin-top: 24px; }
  .s2 { margin-top: 17px; }
  .s3 { margin-top: 18px; }
  .s4 { margin-top: 22px; }

  .line { margin-left: 16px; }
  .multi { height: 20px; margin-top: 10px; line-height: 20px; display: flex; align-items: center; }
  .radio-row { height: 29px; margin-left: 39px; display: flex; align-items: center; gap: 8px; }
  .radio { width: 15px; height: 15px; box-sizing: border-box; border-radius: 50%; border: 1px solid #777; background: #fff; flex: none; }
  .radio.on { border: 4.500px solid #185abd; }

  .opt { height: 29px; margin-left: 16px; display: flex; align-items: center; white-space: nowrap; }
  .cb {
    flex: none;
    width: 15px;
    height: 16px;
    box-sizing: border-box;
    border: 1px solid #666;
    border-radius: 3px;
    background: #fff;
    margin-right: 7px;
    display: flex;
  }
  .cb.checked { background: #185abd; border-color: #185abd; }
  .cb svg { width: 100%; height: 100%; }
  .info { width: 16px; height: 16px; margin-left: 5px; margin-bottom: 6px; flex: none; }
  .multi .info { margin-left: 1px; }

  .field { display: flex; align-items: center; margin-left: 16px; white-space: nowrap; }
  .tips { margin-top: 3px; height: 26px; }
  .tips-label { width: 234px; }
  .select {
    height: 100%;
    box-sizing: border-box;
    border: 1px solid #8f8f8f;
    border-radius: 3px;
    display: flex;
    align-items: center;
    justify-content: space-between;
    padding: 0 6px;
    flex: none;
  }
  .select svg { width: 9px; height: 6px; }
  .sel-tips { width: 420px; }
  .sel-theme { width: 290px; }
  .flabel { width: 146px; }
  .input {
    height: 24px;
    line-height: 22px;
    box-sizing: border-box;
    border: 1px solid #8f8f8f;
    border-radius: 3px;
    padding-left: 7px;
    font-size: 13.500px;
  }
  .f-name { margin-top: 10px; }
  .f-init { margin-top: 4px; }
  .in-name { width: 255px; }
  .in-init { width: 76px; }
  .always { margin-top: 4px; }
  .always .opt { height: 22px; }
  .f-theme { margin-top: 7px; height: 25px; }
  .theme-opt { margin-left: -5px; margin-bottom: 5px; }

  .privacy {
    display: block;
    margin: 10px 0 0 16px;
    width: 266px;
    height: 29px;
    padding: 0;
    background: #fff;
    border: 1px solid #8f8f8f;
    border-radius: 4px;
    font: inherit;
    font-size: 14px;
    color: #333;
  }
  .start1 { margin-top: 10px; }
  .start1 .opt, .start2 .opt { height: 22px; }
  .start2 { margin-top: 15px; }

  .scroll {
    flex: none;
    width: 20px;
    margin-left: 16px;
    height: 760px;
    margin-top: 2px;
    background: #f6f6f6;
    border-radius: 8px;
    display: flex;
    flex-direction: column;
    align-items: center;
    padding: 5px 0 6px;
    box-sizing: border-box;
  }
  .scroll svg { width: 11px; height: 7px; flex: none; }
  .sthumb { width: 11px; height: 694px; margin-top: 7px; background: #6e6e6e; border-radius: 6px; flex: none; }
  .sdown { margin-top: auto; }

  .dlg-foot { flex: 1; display: flex; justify-content: flex-end; gap: 12px; padding: 4px 7px 0 0; }
  .dbtn {
    width: 94px;
    height: 30px;
    padding: 0;
    background: #fff;
    border: 1px solid #a0a0a0;
    border-radius: 4px;
    font: inherit;
    font-size: 14.500px;
    color: #333;
  }
  .dbtn.default { border: 2px solid #111; }
</style>
